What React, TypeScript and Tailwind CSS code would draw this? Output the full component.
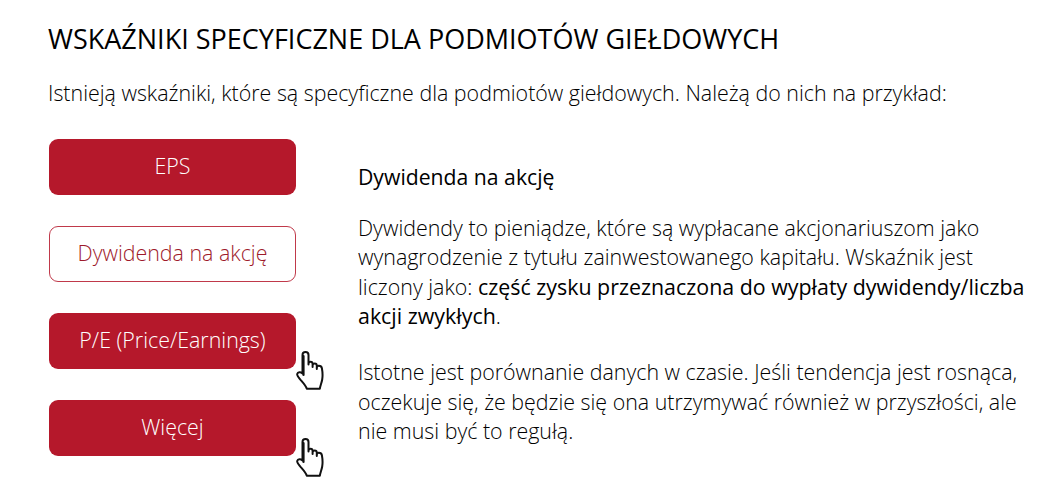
const F = "font-['Open_Sans','Noto_Sans',sans-serif]";

function Hand() {
  return (
    <svg width="28" height="39" viewBox="0 0 28 39" className="absolute left-[247px] top-[38px]" fill="#fff" stroke="#111" strokeWidth="2" strokeLinejoin="round" strokeLinecap="round">
      <path d="M6.5 22.5V4C6.5 1.8 8 1 9.5 1S12.5 1.9 12.5 4V13.5V13C12.5 11.4 13.4 10.8 14.5 10.8S16.6 11.6 16.6 13V16V14.6C16.6 13.2 17.6 12.6 18.7 12.6S20.8 13.4 20.8 14.8V18V16.8C20.8 15.4 21.8 14.8 22.9 14.8S25.6 15.6 25.9 17.2C26.6 21 26.8 25 26.2 28.5C25.7 31.5 24.4 34.5 23.8 37.8H10.8C10.2 35 7 31.6 4.4 28.6C2.6 26.4 0.8 24.4 1.2 23C1.8 21 4.6 20.8 6.5 22.5Z" />
      <path d="M7.5 5V24" strokeWidth="2.2" />
    </svg>
  );
}

function Btn({ label, outline, hand }: { label: string; outline?: boolean; hand?: boolean }) {
  return (
    <div className={`relative flex h-[56px] w-[247px] items-center justify-center rounded-[9px] pb-[2px] text-[21.4px] font-light ${outline ? "border border-[#c0394a] bg-white text-[#9e1a2b]" : "bg-[#b5182b] text-white"}`}>
      {label}
      {hand && <Hand />}
    </div>
  );
}

export default function App() {
  return (
    <div className={`${F} h-[483px] w-[1054px] overflow-hidden bg-white pl-[48px] pt-[21px] text-black`}>
      <h1 className="text-[27px] leading-[36px] font-normal">WSKAŹNIKI SPECYFICZNE DLA PODMIOTÓW GIEŁDOWYCH</h1>
      <p className="mt-[22px] text-[21.4px] leading-[28px] font-light">Istnieją wskaźniki, które są specyficzne dla podmiotów giełdowych. Należą do nich na przykład:</p>
      <div className="mt-[32px] flex pl-[1px]">
        <div className="flex flex-col gap-[31px]">
          <Btn label="EPS" />
          <Btn label="Dywidenda na akcję" outline />
          <Btn label="P/E (Price/Earnings)" hand />
          <Btn label="Więcej" hand />
        </div>
        <div className="ml-[62px] w-[690px] pt-[23px] text-[21.4px] leading-[29.6px] font-light">
          <h2 className="text-[21.2px] font-medium">Dywidenda na akcję</h2>
          <p className="mt-[21px]">Dywidendy to pieniądze, które są wypłacane akcjonariuszom jako<br />wynagrodzenie z tytułu zainwestowanego kapitału. Wskaźnik jest<br />liczony jako: <b className="font-medium">część zysku przeznaczona do wypłaty dywidendy/liczba<br />akcji zwykłych</b>.</p>
          <p className="mt-[26px]">Istotne jest porównanie danych w czasie. Jeśli tendencja jest rosnąca,<br />oczekuje się, że będzie się ona utrzymywać również w przyszłości, ale<br />nie musi być to regułą.</p>
        </div>
      </div>
    </div>
  );
}
